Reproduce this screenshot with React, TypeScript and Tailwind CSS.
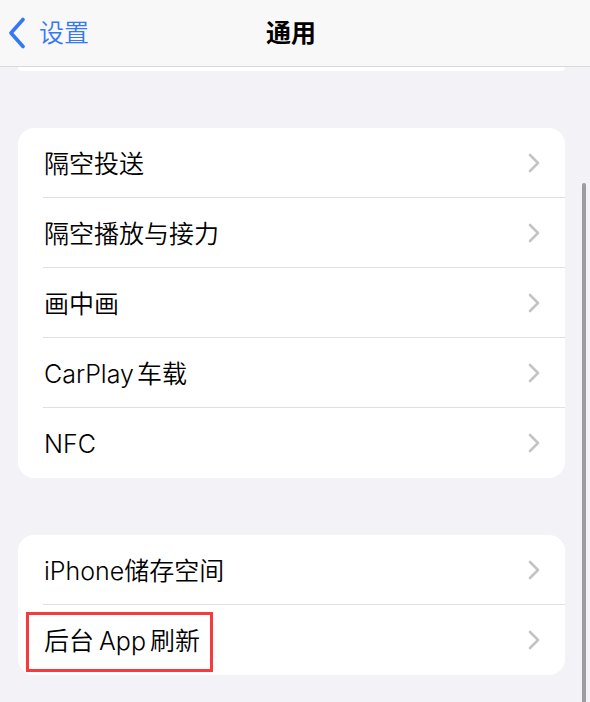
import React from "react";

const FONT = '"Inter", "Noto Sans CJK SC", sans-serif';

function Chevron() {
  return (
    <svg width="12" height="20" viewBox="0 0 12 20" fill="none" className="shrink-0">
      <path d="M2 2 L10 10 L2 18" stroke="#c4c4c7" strokeWidth="2.6" strokeLinecap="round" strokeLinejoin="round" />
    </svg>
  );
}

function Row({ label, last, highlight }: { label: React.ReactNode; last?: boolean; highlight?: boolean }) {
  return (
    <div className="relative flex h-[70px] items-center pl-[25px]">
      {highlight && (
        <div className="pointer-events-none absolute left-[8px] top-[7px] h-[60px] w-[187px] border-[3px] border-[#f53b3b]" />
      )}
      <div className={`flex h-full flex-1 items-center pr-[25px] ${last ? "" : "border-b border-[#e0e0e3]"}`}>
        <span className="flex-1 pl-[1px] pt-[3px] text-[25px] font-[350] leading-none text-black">{label}</span>
        <Chevron />
      </div>
    </div>
  );
}

export default function App() {
  return (
    <div className="relative h-[702px] w-[590px] overflow-hidden bg-[#f2f2f7]" style={{ fontFamily: FONT }}>
      {/* Nav bar */}
      <div className="flex h-[67px] items-center border-b border-[#d9d9db] bg-[#f8f8f8]">
        <div className="flex w-[150px] items-center pl-[8px]">
          <svg width="18" height="32" viewBox="0 0 18 32" fill="none">
            <path d="M15 2.5 L3 16 L15 29.5" stroke="#3478f6" strokeWidth="3.6" strokeLinecap="round" strokeLinejoin="round" />
          </svg>
          <span className="ml-[13px] text-[25px] font-[350] leading-none text-[#3478f6]">设置</span>
        </div>
        <div className="flex flex-1 justify-center">
          <span className="text-[25px] font-bold leading-none text-black">通用</span>
        </div>
        <div className="w-[158px]" />
      </div>

      {/* bottom of previous card */}
      <div className="ml-[18px] mr-[25px] h-[4px] rounded-b-[16px] bg-white" />

      {/* Card 1 */}
      <div className="ml-[18px] mr-[25px] mt-[57px] rounded-[16px] bg-white">
        <Row label="隔空投送" />
        <Row label="隔空播放与接力" />
        <Row label="画中画" />
        <Row label={<>CarPlay<span className="inline-block w-[3px]" />车载</>} />
        <Row label="NFC" last />
      </div>

      {/* Card 2 */}
      <div className="ml-[18px] mr-[25px] mt-[57px] rounded-[16px] bg-white">
        <Row label="iPhone储存空间" />
        <Row
          label={<>后台<span className="inline-block w-[5px]" />App<span className="inline-block w-[4px]" />刷新</>}
          last
          highlight
        />
      </div>

      {/* scroll indicator */}
      <div className="absolute left-[582px] top-[183px] h-[560px] w-[4px] rounded-full bg-[#9d9da0]" />
    </div>
  );
}
